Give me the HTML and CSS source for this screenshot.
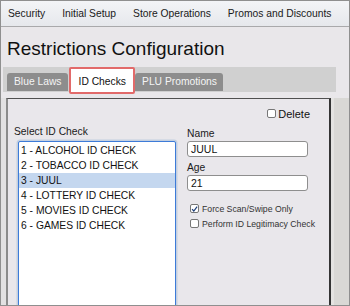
FILE: index.html
```html
<!DOCTYPE html>
<html lang="en">
<head>
    <meta charset="UTF-8">
    <title>Restrictions Configuration</title>
    <link rel="stylesheet" href="styles.css">
</head>
<body>
<div class="frame">
    <nav class="topnav">
        <span>Security</span>
        <span>Initial Setup</span>
        <span>Store Operations</span>
        <span>Promos and Discounts</span>
    </nav>

    <h1 class="title">Restrictions Configuration</h1>

    <div class="tabstrip">
        <div class="tab">Blue Laws</div>
        <div class="tab active">ID Checks</div>
        <div class="tab">PLU Promotions</div>
    </div>

    <div class="body-row">
        <div class="gutter-left"></div>
        <div class="panel">
            <div class="delete-row">
                <span class="cb"></span><span class="delete-text">Delete</span>
            </div>
            <div class="cols">
                <div class="list-col">
                    <div class="label">Select ID Check</div>
                    <div class="listbox">
                        <div class="item">1 - ALCOHOL ID CHECK</div>
                        <div class="item">2 - TOBACCO ID CHECK</div>
                        <div class="item selected">3 - JUUL</div>
                        <div class="item">4 - LOTTERY ID CHECK</div>
                        <div class="item">5 - MOVIES ID CHECK</div>
                        <div class="item">6 - GAMES ID CHECK</div>
                    </div>
                </div>
                <div class="form-col">
                    <div class="label">Name</div>
                    <div class="field">JUUL</div>
                    <div class="label age">Age</div>
                    <div class="field">21</div>
                    <div class="check-row first">
                        <span class="cb small checked">
                            <svg width="8" height="8" viewBox="0 0 8 8"><path d="M1.2 4.2 L3.2 6.3 L7 1.3" fill="none" stroke="#1f3f7a" stroke-width="1.4"/></svg>
                        </span>
                        <span>Force Scan/Swipe Only</span>
                    </div>
                    <div class="check-row">
                        <span class="cb small"></span>
                        <span>Perform ID Legitimacy Check</span>
                    </div>
                </div>
            </div>
        </div>
        <div class="gutter-right"></div>
    </div>
</div>
</body>
</html>
```

FILE: styles.css
```css
body {
    margin: 0;
    font-family: "Liberation Sans", Arial, sans-serif;
}
.frame {
    width: 350px;
    height: 306px;
    box-sizing: border-box;
    border: 1px solid #8f8f8f;
    background-color: #e9e7ea;
    display: flex;
    flex-direction: column;
    overflow: hidden;
}
.topnav {
    height: 25px;
    border-bottom: 1px solid #a9a9ab;
    background: linear-gradient(#f3f4f7, #e6e8ec);
    display: flex;
    align-items: center;
    gap: 17px;
    padding-left: 7px;
    font-size: 10.3px;
    color: #1a1a1a;
    flex-shrink: 0;
}
.title {
    margin: 11px 0 0 0;
    padding-left: 6px;
    font-size: 19px;
    line-height: 22px;
    font-weight: normal;
    color: #111;
}
.tabstrip {
    margin: 7px 13px 6px 2px;
    height: 25px;
    background-color: #d0d0d0;
    display: flex;
    align-items: flex-end;
    padding-left: 4px;
    flex-shrink: 0;
}
.tab {
    height: 18px;
    line-height: 18px;
    padding: 0 6px 0 7px;
    margin-bottom: 1px;
    margin-right: 1px;
    background-color: #8d8d8d;
    color: #f4f4f4;
    font-size: 10.3px;
    border-radius: 3px 3px 0 0;
}
.tab.active {
    height: auto;
    background-color: #fff;
    color: #111;
    border: 2px solid #e26a6a;
    border-radius: 2px;
    padding: 4px 7px 1px 8px;
    margin-bottom: -2px;
    margin-right: 0;
    position: relative;
}
.body-row {
    flex: 1;
    display: flex;
    min-height: 0;
}
.gutter-left {
    width: 5px;
    background-color: #e2e1e2;
}
.panel {
    width: 321px;
    border-top: 1px solid #505050;
    border-left: 2px solid #8b8b8b;
    border-right: 2px solid #343434;
    background-color: #e9e7eb;
    overflow: hidden;
}
.gutter-right {
    flex: 1;
    background-color: #d9d8d5;
    border-left: 3px solid #e4e3e1;
}
.delete-row {
    display: flex;
    justify-content: flex-end;
    align-items: center;
    margin-top: 10px;
    padding-right: 19px;
    height: 9px;
    font-size: 11px;
    color: #111;
}
.delete-text {
    margin-left: 2px;
}
.cb {
    width: 7px;
    height: 7px;
    border: 1px solid #777;
    border-radius: 2px;
    background-color: #fff;
    display: inline-flex;
    align-items: center;
    justify-content: center;
    flex-shrink: 0;
}
.cols {
    display: flex;
}
.list-col {
    padding-left: 6px;
    margin-top: 7px;
}
.label {
    font-size: 10.3px;
    line-height: 13px;
    color: #1a1a1a;
}
.listbox {
    margin: 3px 0 0 4px;
    width: 156px;
    height: 200px;
    border: 1px solid #3d7bd8;
    box-shadow: 0 0 0 1.5px #c3cfe0;
    border-radius: 2px;
    background-color: #fff;
    padding-top: 1px;
}
.item {
    font-size: 10.3px;
    line-height: 15px;
    padding-left: 2px;
    color: #111;
}
.item.selected {
    background-color: #c4d7ef;
}
.form-col {
    margin-left: 11px;
    margin-top: 9px;
    width: 121px;
}
.field {
    margin-top: 1px;
    height: 14px;
    border: 1px solid #8e8e8e;
    border-radius: 3px;
    background-color: #fff;
    font-size: 10.5px;
    line-height: 15px;
    padding-left: 3px;
    color: #111;
}
.label.age {
    margin-top: 4px;
}
.check-row {
    display: flex;
    align-items: center;
    gap: 3px;
    margin-left: 3px;
    margin-top: 4px;
    height: 11px;
    font-size: 8.7px;
    color: #333;
    white-space: nowrap;
}
.check-row.first {
    margin-top: 12px;
}
.cb.small {
    width: 7px;
    height: 7px;
}
```
